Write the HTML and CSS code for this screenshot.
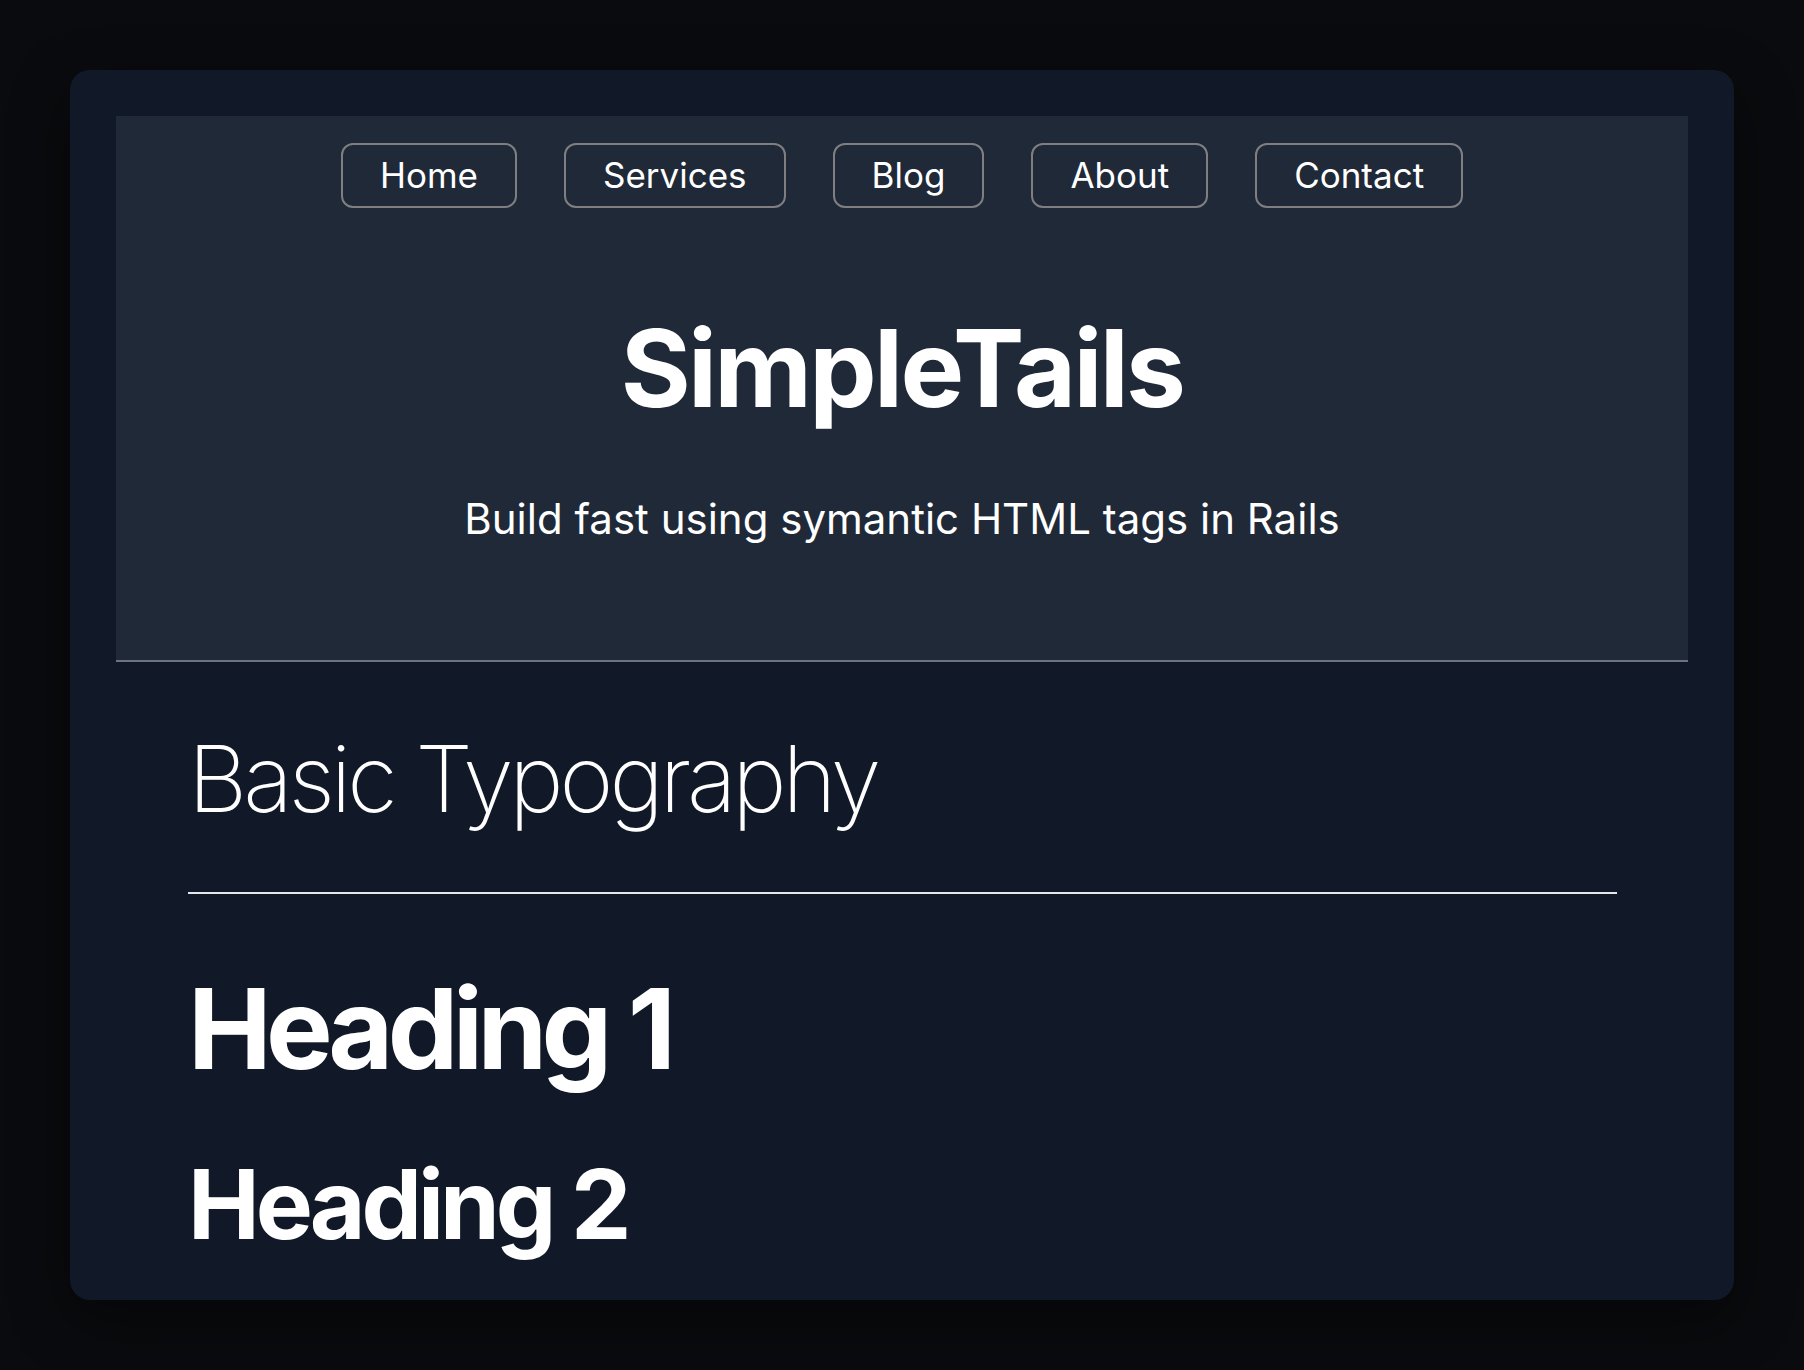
FILE: index.html
```html
<!DOCTYPE html>
<html lang="en">
<head>
<meta charset="utf-8">
<title>SimpleTails</title>
<link rel="stylesheet" href="styles.css">
</head>
<body>
<div class="frame">
  <header class="site-header">
    <nav class="nav">
      <a class="nav-btn" href="#">Home</a>
      <a class="nav-btn" href="#">Services</a>
      <a class="nav-btn" href="#">Blog</a>
      <a class="nav-btn" href="#">About</a>
      <a class="nav-btn" href="#">Contact</a>
    </nav>
    <h1 class="brand">SimpleTails</h1>
    <p class="tagline">Build fast using symantic HTML tags in Rails</p>
  </header>
  <main class="content">
    <h2 class="section-title">Basic Typography</h2>
    <hr class="rule">
    <h1 class="h1">Heading 1</h1>
    <h2 class="h2">Heading 2</h2>
  </main>
</div>
</body>
</html>
```
FILE: styles.css
```css
* { box-sizing: border-box; }
html, body { margin: 0; padding: 0; }
body {
  background: #0a0b0e;
  font-family: Inter, "Noto Sans", sans-serif;
  color: #ffffff;
  width: 1804px;
  height: 1370px;
  overflow: hidden;
  padding: 70px;
}
.frame {
  width: 1664px;
  height: 1230px;
  background: #111827;
  border-radius: 20px;
  padding: 46px 46px 0 46px;
  overflow: hidden;
  box-shadow: 0 20px 60px rgba(0,0,0,0.45);
}
.site-header {
  background: #1f2937;
  border-bottom: 2px solid #6b7280;
  padding: 27px 0 120px;
  display: flex;
  flex-direction: column;
  align-items: center;
}
.nav {
  display: flex;
  gap: 47px;
  justify-content: center;
}
.nav-btn {
  display: block;
  color: #ffffff;
  text-decoration: none;
  font-size: 35px;
  line-height: 53px;
  padding: 4px 37px;
  border: 2px solid #7f7f82;
  border-radius: 12px;
}
.brand {
  margin: 107px 0 0;
  font-size: 107px;
  line-height: 1;
  font-weight: 700;
  letter-spacing: -0.025em;
}
.tagline {
  margin: 76px 0 0;
  font-size: 42px;
  line-height: 1;
  font-weight: 400;
}
.content {
  padding: 0 71px 0 72px;
}
.section-title {
  margin: 71px 0 0;
  font-size: 92px;
  line-height: 1;
  font-weight: 200;
  letter-spacing: -0.045em;
}
.rule {
  margin: 67px 0 0;
  border: 0;
  height: 2px;
  background: #e5e7eb;
}
.h1 {
  margin: 78px 0 0;
  font-size: 112px;
  line-height: 1;
  font-weight: 700;
  letter-spacing: -0.05em;
}
.h2 {
  margin: 72px 0 0;
  font-size: 96px;
  line-height: 1;
  font-weight: 700;
  letter-spacing: -0.042em;
}
```
